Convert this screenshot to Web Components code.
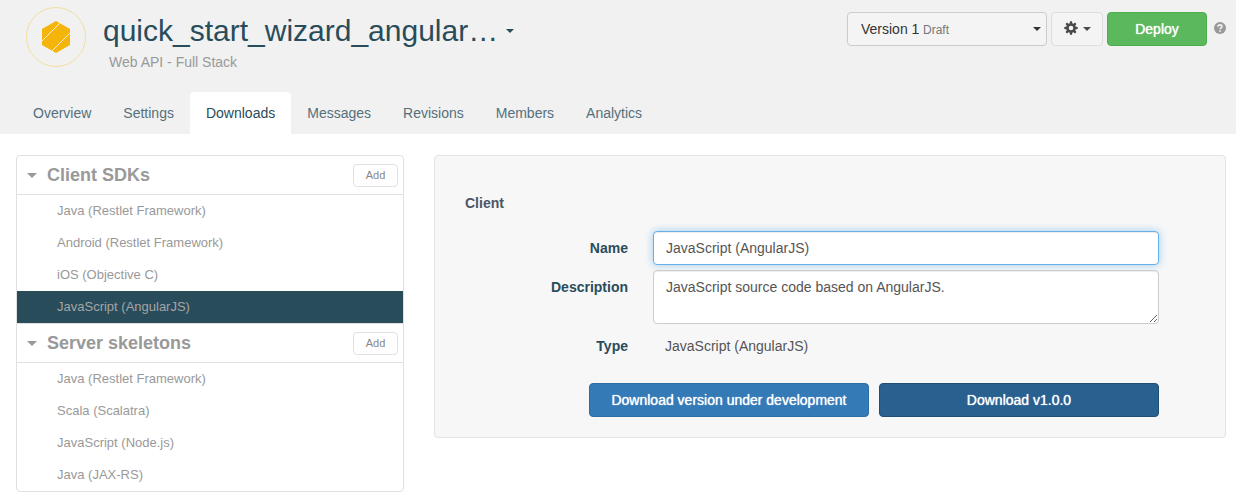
<!DOCTYPE html>
<html lang="en">
<head>
<meta charset="utf-8">
<meta name="viewport" content="width=device-width, initial-scale=1">
<title>Downloads - quick_start_wizard_angular…</title>
<style>
  body {
    margin: 0;
    background: #fff;
    color: #555;
    font: 14px/20px "Liberation Sans", Arial, sans-serif;
    --ink: #294c5b;
    --muted: #999;
    --line: #e0e0e0;
  }
</style>
</head>
<body>
<api-page>
  <api-header slot="header">
    <api-logo slot="logo"></api-logo>
    <span slot="title">quick_start_wizard_angular…</span>
    <span slot="subtitle">Web API - Full Stack</span>
    <api-actions slot="actions"></api-actions>
    <nav-tab slot="tabs" href="#overview">Overview</nav-tab>
    <nav-tab slot="tabs" href="#settings">Settings</nav-tab>
    <nav-tab slot="tabs" href="#downloads" active>Downloads</nav-tab>
    <nav-tab slot="tabs" href="#messages">Messages</nav-tab>
    <nav-tab slot="tabs" href="#revisions">Revisions</nav-tab>
    <nav-tab slot="tabs" href="#members">Members</nav-tab>
    <nav-tab slot="tabs" href="#analytics">Analytics</nav-tab>
  </api-header>
  <side-list slot="side">
    <side-group>
      <span slot="heading">Client SDKs</span>
      <side-item href="#java-client">Java (Restlet Framework)</side-item>
      <side-item href="#android">Android (Restlet Framework)</side-item>
      <side-item href="#ios">iOS (Objective C)</side-item>
      <side-item href="#angular" active>JavaScript (AngularJS)</side-item>
    </side-group>
    <side-group divided>
      <span slot="heading">Server skeletons</span>
      <side-item href="#java-server">Java (Restlet Framework)</side-item>
      <side-item href="#scala">Scala (Scalatra)</side-item>
      <side-item href="#node">JavaScript (Node.js)</side-item>
      <side-item href="#jaxrs">Java (JAX-RS)</side-item>
    </side-group>
  </side-list>
  <client-form slot="main"></client-form>
</api-page>

<script>
  const define = (name, html) => {
    const template = document.createElement('template');
    template.innerHTML = '<style>*{box-sizing:border-box}</style>' + html;
    customElements.define(name, class extends HTMLElement {
      constructor() {
        super();
        this.attachShadow({ mode: 'open' }).append(template.content.cloneNode(true));
      }
      connectedCallback() {
        const link = this.shadowRoot.querySelector('a[data-link]');
        if (link) {
          link.href = this.getAttribute('href') || '#';
          if (this.hasAttribute('active')) link.setAttribute('aria-current', 'page');
        }
      }
    });
  };

  define('api-page', `
    <style>
      :host { display: block; }
      main {
        display: grid;
        grid-template-columns: minmax(0, 97fr) minmax(0, 198fr);
        gap: 30px;
        align-items: start;
        padding: 21px 10px 8px 16px;
      }
    </style>
    <slot name="header"></slot>
    <main><slot name="side"></slot><slot name="main"></slot></main>
  `);

  define('caret-icon', `
    <style>
      :host { display: inline-block; border: 4px solid transparent; border-top-color: currentColor; border-bottom: 0; }
      :host([large]) { border-width: 5px 5px 0; }
    </style>
  `);

  define('api-logo', `
    <style>
      :host { display: block; flex: none; }
      svg { display: block; }
    </style>
    <svg width="60" height="60" viewBox="0 0 60 60" aria-hidden="true">
      <circle cx="30" cy="30" r="29.5" fill="none" stroke="#f3dea0"/>
      <path d="M30 14 44 22V38L30 46 16 38V22Z" fill="#f5b40a"/>
      <path d="M15.5 34.5 35.5 14.5M25.5 44.500 44.500 25.500" stroke="#f7edd2" stroke-width="1"/>
    </svg>
  `);

  define('api-header', `
    <style>
      :host { display: block; background: #f1f1f1; }
      .top { display: flex; align-items: flex-start; padding: 7px 10px 0 26px; }
      .names { flex: 1; min-width: 0; padding: 7px 16px 20px 17px; }
      h1 { display: flex; align-items: center; gap: 8px; margin: 0; font-size: 30px; line-height: 34px; font-weight: 400; color: var(--ink); }
      button { display: flex; padding: 4px 0; border: 0; background: none; color: inherit; }
      p { margin: 4px 0 0; padding-left: 6px; color: var(--muted); }
      nav { display: flex; padding: 0 17px; }
    </style>
    <header>
      <div class="top">
        <slot name="logo"></slot>
        <div class="names">
          <h1><slot name="title"></slot><button type="button" aria-label="Switch API"><caret-icon></caret-icon></button></h1>
          <p><slot name="subtitle"></slot></p>
        </div>
        <slot name="actions"></slot>
      </div>
      <nav><slot name="tabs"></slot></nav>
    </header>
  `);

  define('nav-tab', `
    <style>
      :host { display: block; }
      a { display: block; padding: 11px 16px; border-radius: 4px 4px 0 0; color: #54707c; text-decoration: none; }
      :host([active]) a { background: #fff; color: var(--ink); }
    </style>
    <a data-link href="#"><slot></slot></a>
  `);

  define('api-actions', `
    <style>
      :host { display: flex; align-items: center; gap: 4px; padding-top: 5px; }
      button, select { height: 34px; border-radius: 4px; font: inherit; }
      .version { display: grid; align-items: center; width: 200px; color: #333; }
      .version > * { grid-area: 1 / 1; }
      select { appearance: none; width: 100%; padding: 0 13px; border: 1px solid #ccc; background: #f4f4f4; color: inherit; }
      .state { margin-left: 76px; padding-top: 2px; font-size: 12px; color: #777; justify-self: start; pointer-events: none; }
      .version caret-icon { justify-self: end; margin-right: 6px; pointer-events: none; }
      .gear { display: flex; align-items: center; justify-content: center; gap: 5px; width: 52px; padding: 0; border: 1px solid #ddd; background: #f4f4f4; color: #4a4a4a; }
      .gear svg, .help svg { margin-bottom: 2px; }
      .deploy { width: 100px; border: 1px solid #4cae4c; background: #5cb85c; color: #fff; text-shadow: 0 0 1px #fff; }
      .help { display: flex; margin-left: 3px; color: #999; }
    </style>
    <div class="version">
      <select aria-label="Version"><option>Version 1</option></select>
      <span class="state">Draft</span>
      <caret-icon></caret-icon>
    </div>
    <button class="gear" type="button" aria-label="Options">
      <svg width="14" height="14" viewBox="0 0 14 14" aria-hidden="true">
        <g fill="currentColor">
          <path fill-rule="evenodd" d="M7 2.2a4.8 4.8 0 1 0 0 9.6 4.8 4.8 0 0 0 0-9.6ZM7 4.7a2.3 2.3 0 1 1 0 4.6 2.3 2.3 0 0 1 0-4.6Z"/>
          <path id="t" d="M6 .3H8L8.4 3H5.6ZM6 13.7H8L8.4 11H5.6Z"/>
          <use href="#t" transform="rotate(45 7 7)"/><use href="#t" transform="rotate(90 7 7)"/><use href="#t" transform="rotate(135 7 7)"/>
        </g>
      </svg>
      <caret-icon></caret-icon>
    </button>
    <button class="deploy" type="button">Deploy</button>
    <a class="help" href="#help" aria-label="Help">
      <svg width="12" height="12" viewBox="0 0 12 12" aria-hidden="true">
        <circle cx="6" cy="6" r="6" fill="currentColor"/>
        <path d="M4 4.7C4 2.3 8 2.3 8 4.5 8 5.9 6.1 5.7 6.1 7.3" fill="none" stroke="#f1f1f1" stroke-width="1.6"/>
        <path d="M5.2 8.2H7V9.8H5.2Z" fill="#f1f1f1"/>
      </svg>
    </a>
  `);

  define('side-list', `
    <style>
      :host { display: block; border: 1px solid var(--line); border-radius: 4px; overflow: hidden; }
    </style>
    <slot></slot>
  `);

  define('side-group', `
    <style>
      :host { display: block; color: var(--muted); }
      :host([divided]) { border-top: 1px solid var(--line); }
      .head { display: flex; align-items: center; height: 39px; padding: 0 5px 0 10px; border-bottom: 1px solid var(--line); }
      h2 { flex: 1; margin: 0 0 0 10px; font-size: 18px; line-height: 20px; }
      .fold { display: flex; padding: 0; border: 0; background: none; color: inherit; }
      .add { width: 45px; height: 23px; padding: 0; border: 1px solid var(--line); border-radius: 4px; background: #fff; color: #888; font: inherit; font-size: 11px; }
    </style>
    <section>
      <div class="head">
        <button class="fold" type="button" aria-label="Collapse" aria-expanded="true"><caret-icon large></caret-icon></button>
        <h2><slot name="heading"></slot></h2>
        <button class="add" type="button">Add</button>
      </div>
      <slot></slot>
    </section>
  `);

  define('side-item', `
    <style>
      :host { display: block; font-size: 13px; }
      a { display: block; padding: 6px 16px 6px 40px; color: var(--muted); text-decoration: none; }
      :host([active]) a { background: var(--ink); color: #a5a5a5; }
    </style>
    <a data-link href="#"><slot></slot></a>
  `);

  define('client-form', `
    <style>
      :host { display: block; border: 1px solid #e3e3e3; border-radius: 4px; background: #f7f7f7; }
      form { padding: 37px 66px 20px 30px; }
      h3 { margin: 0 0 18px; font-size: 14px; line-height: 20px; color: #4b5566; }
      .fields { display: grid; grid-template-columns: 163px minmax(0, 1fr); gap: 5px 25px; }
      label { padding-top: 7px; font-weight: 700; text-align: right; color: var(--ink); }
      input, textarea {
        display: block; width: 100%; margin: 0; padding: 6px 12px;
        border: 1px solid #ccc; border-radius: 4px; background: #fff;
        color: #555; font: inherit; outline: 0;
        box-shadow: inset 0 1px 1px rgba(0, 0, 0, .075);
      }
      input { height: 34px; }
      textarea { height: 54px; resize: vertical; }
      .current { border-color: #66afe9; box-shadow: inset 0 1px 1px rgba(0, 0, 0, .075), 0 0 8px rgba(102, 175, 233, .6); }
      output { padding: 7px 12px; }
      .buttons { display: flex; gap: 10px; margin: 20px 0 0 124px; }
      button { flex: 1 1 0; height: 34px; padding: 0; border: 1px solid #2e6da4; border-radius: 4px; background: #337ab7; color: #fff; font: inherit; text-shadow: 0 0 1px #fff; }
      .release { border-color: #204d74; background: #286090; }
    </style>
    <form>
      <h3>Client</h3>
      <div class="fields">
        <label for="name">Name</label>
        <input id="name" class="current" type="text" value="JavaScript (AngularJS)">
        <label for="description">Description</label>
        <textarea id="description">JavaScript source code based on AngularJS.</textarea>
        <label for="type">Type</label>
        <output id="type">JavaScript (AngularJS)</output>
      </div>
      <div class="buttons">
        <button type="button">Download version under development</button>
        <button class="release" type="button">Download v1.0.0</button>
      </div>
    </form>
  `);
</script>
</body>
</html>
